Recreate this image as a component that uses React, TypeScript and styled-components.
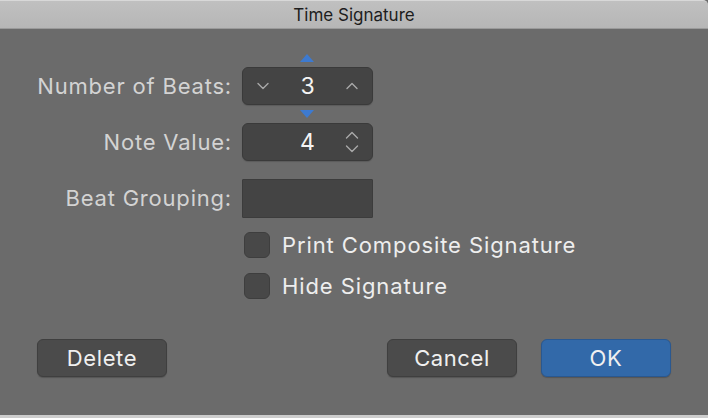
import React from "react";
import styled, { createGlobalStyle } from "styled-components";

const GlobalStyle = createGlobalStyle`
    html, body {
        margin: 0;
        padding: 0;
        background: #6b6b6b;
    }
    body {
        font-family: Inter, "Noto Sans", "Liberation Sans", sans-serif;
    }
`;

const ChevronDown = () => (
    <svg width="12" height="8" viewBox="0 0 12 8">
        <polyline points="1,1.5 6,6.5 11,1.5" fill="none" stroke="#a9a9a9" strokeWidth="1.4" strokeLinecap="round" strokeLinejoin="round"/>
    </svg>
);

const ChevronUp = () => (
    <svg width="12" height="8" viewBox="0 0 12 8">
        <polyline points="1,6.5 6,1.5 11,6.5" fill="none" stroke="#a9a9a9" strokeWidth="1.4" strokeLinecap="round" strokeLinejoin="round"/>
    </svg>
);

const UpDown = () => (
    <svg width="14" height="22" viewBox="0 0 14 22">
        <polyline points="1.5,7 7,1.5 12.5,7" fill="none" stroke="#a9a9a9" strokeWidth="1.4" strokeLinecap="round" strokeLinejoin="round"/>
        <polyline points="1.5,15 7,20.5 12.5,15" fill="none" stroke="#a9a9a9" strokeWidth="1.4" strokeLinecap="round" strokeLinejoin="round"/>
    </svg>
);

const App = () => {
    return (
        <>
            <GlobalStyle/>
            <Window>
                <TitleBar>Time Signature</TitleBar>

                <Content>
                    <Form>
                        <Label>Number of Beats:</Label>
                        <Stepper>
                            <Marker $dir="up"/>
                            <StepButton><ChevronDown/></StepButton>
                            <Value>3</Value>
                            <StepButton><ChevronUp/></StepButton>
                            <Marker $dir="down"/>
                        </Stepper>

                        <Label>Note Value:</Label>
                        <Stepper>
                            <Spacer/>
                            <Value>4</Value>
                            <StepButton><UpDown/></StepButton>
                        </Stepper>

                        <Label>Beat Grouping:</Label>
                        <TextField/>
                    </Form>

                    <Checks>
                        <CheckRow>
                            <CheckBox/>
                            <CheckLabel>Print Composite Signature</CheckLabel>
                        </CheckRow>
                        <CheckRow>
                            <CheckBox/>
                            <CheckLabel>Hide Signature</CheckLabel>
                        </CheckRow>
                    </Checks>

                    <Footer>
                        <Button>Delete</Button>
                        <FooterRight>
                            <Button>Cancel</Button>
                            <Button $primary>OK</Button>
                        </FooterRight>
                    </Footer>
                </Content>
            </Window>
        </>
    );
};

const Window = styled.div`
    width: 708px;
    height: 418px;
    box-sizing: border-box;
    display: flex;
    flex-direction: column;
    background: #6b6b6b;
    border-bottom: 3px solid #cdcdcd;
`

const TitleBar = styled.div`
    height: 29px;
    box-sizing: border-box;
    display: flex;
    align-items: center;
    justify-content: center;
    background: linear-gradient(#c0c0c0, #b6b6b6);
    border-top: 1px solid #d8d8d8;
    border-bottom: 1px solid #9a9a9a;
    border-top-right-radius: 5px;
    color: #1d1d1d;
    font-size: 17px;
`

const Content = styled.div`
    flex: 1;
    display: flex;
    flex-direction: column;
    padding: 38px 37px 0 36px;
`

const Form = styled.div`
    display: grid;
    grid-template-columns: 196px 131px;
    grid-auto-rows: 38px;
    column-gap: 10px;
    row-gap: 18px;
    align-items: center;
`

const Label = styled.div`
    text-align: right;
    color: #d3d3d3;
    font-size: 22px;
    letter-spacing: 0.8px;
    white-space: nowrap;
`

const Stepper = styled.div`
    position: relative;
    height: 38px;
    box-sizing: border-box;
    display: flex;
    align-items: center;
    background: #444444;
    border: 1px solid #3a3a3a;
    border-radius: 6px;
    box-shadow: 0 1px 1px rgba(0, 0, 0, 0.15);
    padding: 0 12px;
`

const StepButton = styled.div`
    width: 16px;
    display: flex;
    justify-content: center;
    align-items: center;
`

const Spacer = styled.div`
    width: 16px;
`

const Value = styled.div`
    flex: 1;
    text-align: center;
    color: #f4f4f4;
    font-size: 23px;
`

const Marker = styled.div<{ $dir: "up" | "down" }>`
    position: absolute;
    left: 57px;
    width: 0;
    height: 0;
    border-left: 7px solid transparent;
    border-right: 7px solid transparent;
    ${p => p.$dir === "up"
        ? `top: -14px; border-bottom: 8px solid #3d7ad0;`
        : `bottom: -14px; border-top: 8px solid #3d7ad0;`}
`

const TextField = styled.div`
    height: 39px;
    box-sizing: border-box;
    background: #444444;
    border: 1px solid #3c3c3c;
    border-radius: 1px;
`

const Checks = styled.div`
    display: flex;
    flex-direction: column;
    gap: 15px;
    margin-top: 15px;
    padding-left: 208px;
`

const CheckRow = styled.div`
    display: flex;
    align-items: center;
    gap: 12px;
`

const CheckBox = styled.div`
    width: 26px;
    height: 26px;
    box-sizing: border-box;
    background: #484848;
    border: 1px solid #3e3e3e;
    border-radius: 6px;
`

const CheckLabel = styled.div`
    color: #eeeeee;
    font-size: 22px;
    letter-spacing: 0.9px;
`

const Footer = styled.div`
    margin-top: auto;
    padding-bottom: 38px;
    padding-left: 1px;
    display: flex;
    justify-content: space-between;
`

const FooterRight = styled.div`
    display: flex;
    gap: 24px;
`

const Button = styled.div<{ $primary?: boolean }>`
    width: 130px;
    height: 38px;
    box-sizing: border-box;
    display: flex;
    align-items: center;
    justify-content: center;
    border-radius: 6px;
    font-size: 22px;
    letter-spacing: 0.6px;
    color: #f0f0f0;
    background: ${p => p.$primary ? "#3269a9" : "#4b4b4b"};
    border: 1px solid ${p => p.$primary ? "#2a5890" : "#3f3f3f"};
    box-shadow: 0 1px 1px rgba(0, 0, 0, 0.2);
`

export default App;
